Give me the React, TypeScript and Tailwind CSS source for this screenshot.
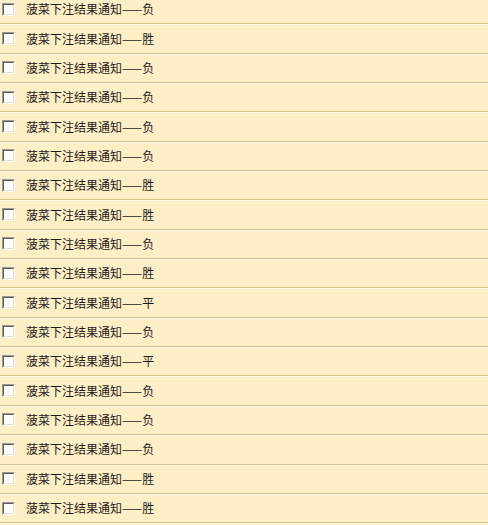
const results = ['负', '胜', '负', '负', '负', '负', '胜', '胜', '负', '胜', '平', '负', '平', '负', '负', '负', '胜', '胜'];

function OldCheckbox() {
  return (
    <span className="inline-block w-[13px] h-[13px] border border-t-[#9c9c9c] border-l-[#9c9c9c] border-r-[#fffdf6] border-b-[#fffdf6]">
      <span className="block w-full h-full border border-t-[#5a5a5a] border-l-[#5a5a5a] border-r-[#e6e1d2] border-b-[#e6e1d2] bg-[#fdfdfb]" />
    </span>
  );
}

export default function App() {
  return (
    <div className="w-[488px] h-[525px] overflow-hidden bg-[#ffefc6]" style={{ fontFamily: '"Noto Sans CJK SC", "Noto Sans", sans-serif' }}>
      <ul className="-mt-[5px]">
        {results.map((r, i) => (
          <li key={i} className="h-[29.35px] flex items-center border-b border-[#d6c28c] shadow-[0_1px_0_#fff8e2]">
            <span className="ml-[2px] flex items-center">
              <OldCheckbox />
            </span>
            <span className="ml-[11px] text-[12px] leading-none text-[#1c1c1c]">
              菠菜下注结果通知——{r}
            </span>
          </li>
        ))}
      </ul>
    </div>
  );
}
